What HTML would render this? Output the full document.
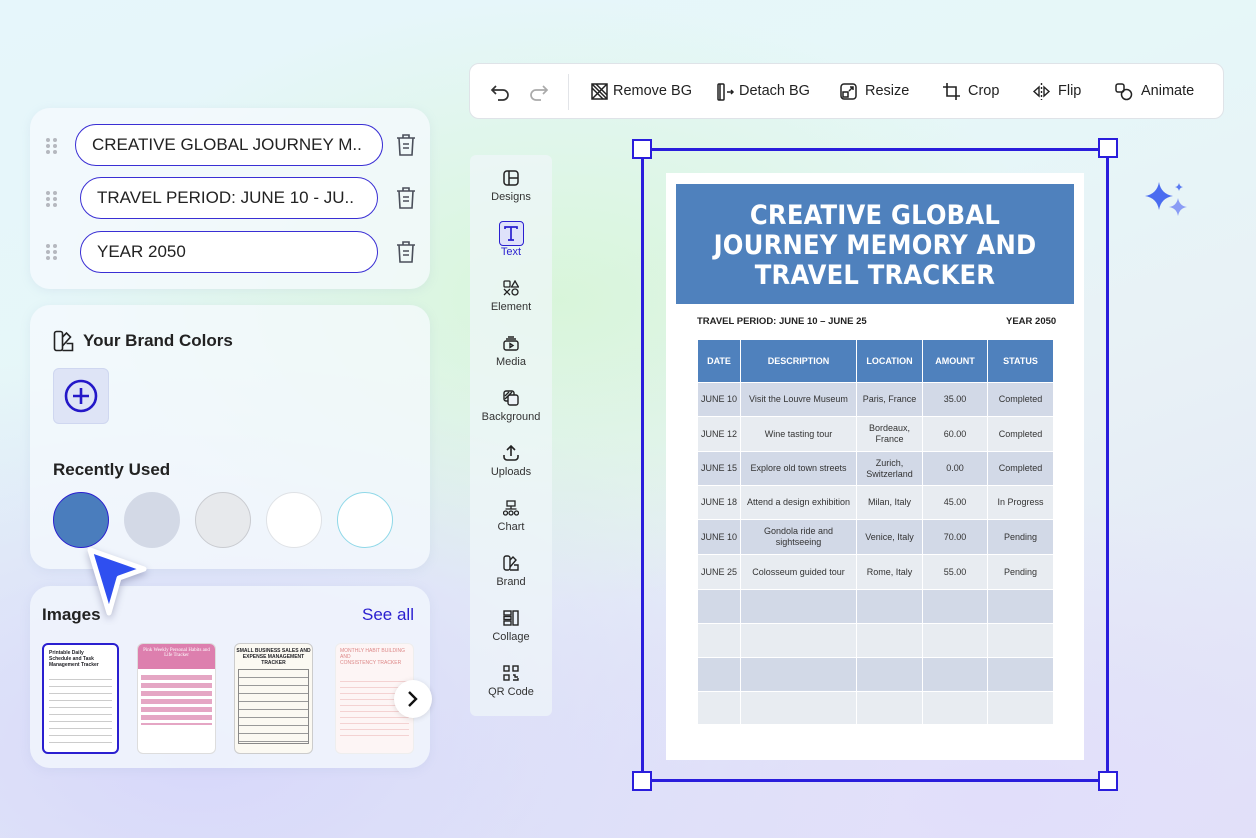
<!DOCTYPE html>
<html><head><meta charset="utf-8"><style>
*{margin:0;padding:0;box-sizing:border-box}
body{width:1256px;height:838px;overflow:hidden;position:relative;font-family:"Liberation Sans",sans-serif;color:#1f1f24;
background:radial-gradient(ellipse 500px 300px at 560px 300px,rgba(215,245,215,.9),transparent),radial-gradient(ellipse 700px 400px at 200px 750px,rgba(215,215,250,1),transparent),radial-gradient(ellipse 600px 300px at 1000px 800px,rgba(225,222,250,1),transparent),linear-gradient(160deg,#e6f6fb 0%,#e6f7f8 35%,#e8f1f6 60%,#e2e3f8 100%)}
.abs{position:absolute}
.panel{position:absolute;background:rgba(245,250,253,.75);border-radius:20px;box-shadow:0 2px 10px rgba(150,170,200,.15)}
.pill{position:absolute;height:42px;border:1.6px solid #3a2fd4;border-radius:22px;background:#fff;font-size:17px;line-height:39px;padding-left:16px;color:#222;white-space:nowrap;overflow:hidden}
.dots{position:absolute;width:12px;height:16px}
.dots i{position:absolute;width:4px;height:4px;border-radius:50%;background:#b5b8bf}
.sw{position:absolute;top:492px;width:56px;height:56px;border-radius:50%}
.tb{position:absolute;top:63px;left:469px;width:755px;height:56px;background:#fff;border:1px solid #dfe3e8;border-radius:10px}
.ti{position:absolute;top:0;height:56px;line-height:55px;font-size:14.5px;color:#222;white-space:nowrap}
.ti svg{position:absolute;top:19px;left:0}
.side{position:absolute;left:470px;top:155px;width:82px;height:561px;background:rgba(240,246,250,.7);border-radius:6px}
.si{position:absolute;left:0;width:82px;text-align:center;font-size:11px;color:#333}
.si svg{display:block;margin:0 auto 5px}
.h{position:absolute;width:20px;height:20px;background:#fff;border:2.5px solid #2a1ddc}
table{position:absolute;left:697px;top:339px;width:357px;border-collapse:collapse;font-family:"Liberation Sans",sans-serif;font-size:9px;color:#333;text-align:center}
td,th{border:1.5px solid #fff;padding:0 2px;line-height:11px}
th{background:#4f81bd;color:#fff;font-size:9px;height:43px}
tr.a td{background:#d2d9e7}
tr.b td{background:#e8ecf1}
</style></head><body>

<div class="panel" style="left:30px;top:108px;width:400px;height:181px"></div>
<div class="dots" style="left:46px;top:138px"><i style="left:0;top:0"></i><i style="left:7px;top:0"></i><i style="left:0;top:6px"></i><i style="left:7px;top:6px"></i><i style="left:0;top:12px"></i><i style="left:7px;top:12px"></i></div>
<div class="dots" style="left:46px;top:191px"><i style="left:0;top:0"></i><i style="left:7px;top:0"></i><i style="left:0;top:6px"></i><i style="left:7px;top:6px"></i><i style="left:0;top:12px"></i><i style="left:7px;top:12px"></i></div>
<div class="dots" style="left:46px;top:244px"><i style="left:0;top:0"></i><i style="left:7px;top:0"></i><i style="left:0;top:6px"></i><i style="left:7px;top:6px"></i><i style="left:0;top:12px"></i><i style="left:7px;top:12px"></i></div>
<div class="pill" style="left:75px;top:124px;width:308px">CREATIVE GLOBAL JOURNEY M..</div>
<div class="pill" style="left:80px;top:177px;width:298px">TRAVEL PERIOD: JUNE 10 - JU..</div>
<div class="pill" style="left:80px;top:231px;width:298px">YEAR 2050</div>
<svg class="abs" style="left:395px;top:133px" width="22" height="24" viewBox="0 0 22 24" fill="none" stroke="#4a4f5a" stroke-width="1.6"><path d="M2 5h18M8 5V2h6v3M4 5l1 17h12l1-17M8 11h6M8 15h6"/></svg>
<svg class="abs" style="left:395px;top:186px" width="22" height="24" viewBox="0 0 22 24" fill="none" stroke="#4a4f5a" stroke-width="1.6"><path d="M2 5h18M8 5V2h6v3M4 5l1 17h12l1-17M8 11h6M8 15h6"/></svg>
<svg class="abs" style="left:395px;top:240px" width="22" height="24" viewBox="0 0 22 24" fill="none" stroke="#4a4f5a" stroke-width="1.6"><path d="M2 5h18M8 5V2h6v3M4 5l1 17h12l1-17M8 11h6M8 15h6"/></svg>

<div class="panel" style="left:30px;top:305px;width:400px;height:264px"></div>
<svg class="abs" style="left:53px;top:330px" width="22" height="22" viewBox="0 0 22 22" fill="none" stroke="#222" stroke-width="1.6"><rect x="1.5" y="1.5" width="8" height="19" rx="2"/><path d="M9.5 7l4-4 4 4-8 9M9.5 20.5h10v-7h-6"/></svg>
<div class="abs" style="left:83px;top:331px;font-size:17px;font-weight:bold;color:#222">Your Brand Colors</div>
<div class="abs" style="left:53px;top:368px;width:56px;height:56px;background:#dee4f6;border-radius:6px;border:1px solid #cfd7f0"></div>
<svg class="abs" style="left:64px;top:379px" width="34" height="34" viewBox="0 0 34 34" fill="none" stroke="#2418c8" stroke-width="2.6"><circle cx="17" cy="17" r="15"/><path d="M17 9v16M9 17h16"/></svg>
<div class="abs" style="left:53px;top:460px;font-size:17px;font-weight:bold;color:#222">Recently Used</div>
<div class="sw" style="left:53px;background:#4a7dbd;border:1.5px solid #2a1fd0"></div>
<div class="sw" style="left:124px;background:#d3d9e6"></div>
<div class="sw" style="left:195px;background:#e7e9ec;border:1px solid #c9cbd0"></div>
<div class="sw" style="left:266px;background:#fff;border:1px solid #dfe2e6"></div>
<div class="sw" style="left:337px;background:#fff;border:1px solid #8fd8e8"></div>

<div class="panel" style="left:30px;top:586px;width:400px;height:182px;background:rgba(240,244,252,.9)"></div>
<div class="abs" style="left:42px;top:605px;font-size:17px;font-weight:bold;color:#222">Images</div>
<div class="abs" style="left:362px;top:605px;font-size:17px;color:#2a1fd0">See all</div>
<div class="abs" style="left:42px;top:643px;width:77px;height:111px;background:#fff;border:2px solid #2a1fd0;border-radius:6px;padding:5px;font-size:5px;font-weight:bold;line-height:6px">Printable Daily<br>Schedule and Task<br>Management Tracker
<div style="margin-top:5px;height:72px;background:repeating-linear-gradient(#fff 0 6px,#ccc 6px 7px)"></div></div>
<div class="abs" style="left:137px;top:643px;width:79px;height:111px;background:#fff;border-radius:6px;border:1px solid #ddd;overflow:hidden">
<div style="height:25px;background:#dd7fae;color:#fff;font-size:5px;text-align:center;padding-top:4px;font-family:'Liberation Serif',serif">Pink Weekly Personal Habits and<br>Life Tracker</div>
<div style="margin:4px 3px;height:52px;background:repeating-linear-gradient(#fff 0 2px,#e5a6c4 2px 7px,#fff 7px 8px)"></div></div>
<div class="abs" style="left:234px;top:643px;width:79px;height:111px;background:#fbf9f2;border-radius:6px;border:1px solid #ccc;overflow:hidden">
<div style="font-size:5px;font-weight:bold;text-align:center;padding-top:4px;line-height:6px">SMALL BUSINESS SALES AND<br>EXPENSE MANAGEMENT<br>TRACKER</div>
<div style="margin:3px 3px;height:75px;border:1px solid #888;background:repeating-linear-gradient(#fbf9f2 0 7px,#999 7px 8px)"></div></div>
<div class="abs" style="left:335px;top:643px;width:79px;height:111px;background:#fdf5f5;border-radius:6px;border:1px solid #eee;overflow:hidden">
<div style="font-size:5px;color:#d88;padding:4px 4px;line-height:6px">MONTHLY HABIT BUILDING AND<br>CONSISTENCY TRACKER</div>
<div style="margin:6px 4px;height:60px;background:repeating-linear-gradient(#fdf5f5 0 5px,#f4d2d2 5px 6px)"></div></div>
<div class="abs" style="left:394px;top:680px;width:38px;height:38px;border-radius:50%;background:#fff;box-shadow:0 1px 6px rgba(0,0,0,.12)"></div>
<svg class="abs" style="left:405px;top:689px" width="14" height="20" viewBox="0 0 14 20" fill="none" stroke="#111" stroke-width="2.4"><path d="M4 3l7 7-7 7"/></svg>

<svg class="abs" style="left:78px;top:530px" width="80" height="95" viewBox="0 0 80 95"><path d="M12 20l54 19-25 9-10 35z" fill="#2f4ff0" stroke="#fff" stroke-width="5" stroke-linejoin="round" style="filter:drop-shadow(0 3px 4px rgba(0,0,60,.25))"/></svg>

<div class="tb">
<svg class="abs" style="left:20px;top:19px" width="20" height="18" viewBox="0 0 20 18" fill="none" stroke="#333" stroke-width="1.7"><path d="M6 3L2 7l4 4M2 7h11a5 5 0 010 10H8"/></svg>
<svg class="abs" style="left:59px;top:19px" width="20" height="18" viewBox="0 0 20 18" fill="none" stroke="#aaa" stroke-width="1.7"><path d="M14 3l4 4-4 4M18 7H7a5 5 0 000 10h5"/></svg>
<div class="abs" style="left:98px;top:10px;width:1px;height:36px;background:#e2e4e8"></div>
<div class="ti" style="left:121px;padding-left:22px"><svg width="17" height="17" viewBox="0 0 17 17" fill="none" stroke="#222" stroke-width="1.5"><rect x="1" y="1" width="15" height="15"/><path d="M1 1l15 15M16 1L1 16M5 1l11 11M1 5l11 11"/></svg>Remove BG</div>
<div class="ti" style="left:247px;padding-left:22px"><svg width="18" height="18" viewBox="0 0 18 18" fill="none" stroke="#222" stroke-width="1.5"><rect x="1" y="1" width="6" height="16" rx="1"/><path d="M3 1v16M10 9h6M14 7l2 2-2 2"/></svg>Detach BG</div>
<div class="ti" style="left:370px;padding-left:25px"><svg width="17" height="17" viewBox="0 0 17 17" fill="none" stroke="#222" stroke-width="1.5"><rect x="1" y="1" width="15" height="15" rx="3"/><rect x="3" y="9" width="5" height="5"/><path d="M9 8l4-4M10 4h3v3"/></svg>Resize</div>
<div class="ti" style="left:473px;padding-left:25px"><svg width="17" height="17" viewBox="0 0 17 17" fill="none" stroke="#222" stroke-width="1.6"><path d="M4 0v13h13M0 4h13v13"/></svg>Crop</div>
<div class="ti" style="left:562px;padding-left:26px"><svg width="19" height="17" viewBox="0 0 19 17" fill="none" stroke="#222" stroke-width="1.4"><path d="M9.5 0v17" stroke-dasharray="2 2"/><path d="M7 4L2 8.5 7 13zM12 4l5 4.5-5 4.5z"/></svg>Flip</div>
<div class="ti" style="left:645px;padding-left:26px"><svg width="18" height="18" viewBox="0 0 18 18" fill="none" stroke="#222" stroke-width="1.5"><rect x="1" y="1" width="8" height="8" rx="2"/><circle cx="11.5" cy="11.5" r="5"/></svg>Animate</div>
</div>

<div class="side">
<div class="si" style="top:15px"><svg width="16" height="16" viewBox="0 0 16 16" fill="none" stroke="#222" stroke-width="1.5"><rect x="1" y="1" width="14" height="14" rx="3"/><path d="M6 1v14M6 8h9"/></svg>Designs</div>
<div class="abs" style="left:29px;top:66px;width:25px;height:25px;border:1.5px solid #2a1fd0;border-radius:4px;background:#dfe2fa"></div>
<div class="si" style="top:70px;color:#2a1fd0"><svg width="16" height="16" viewBox="0 0 16 16" fill="none" stroke="#2a1fd0" stroke-width="1.7"><path d="M2 4V2h12v2M8 2v13M5 15h6"/></svg>Text</div>
<div class="si" style="top:125px"><svg width="16" height="16" viewBox="0 0 16 16" fill="none" stroke="#222" stroke-width="1.3"><rect x="1" y="1" width="6" height="6" rx="1"/><path d="M12 1l3.5 6h-7z"/><path d="M1 9l6 6M7 9l-6 6"/><circle cx="12" cy="12" r="3"/></svg>Element</div>
<div class="si" style="top:180px"><svg width="16" height="16" viewBox="0 0 16 16" fill="none" stroke="#222" stroke-width="1.4"><rect x="1" y="6" width="14" height="9" rx="2"/><path d="M3 4h10M5 2h6M7 8.5v4l3-2z"/></svg>Media</div>
<div class="si" style="top:235px"><svg width="16" height="16" viewBox="0 0 16 16" fill="none" stroke="#222" stroke-width="1.4"><rect x="1" y="1" width="10" height="10" rx="2"/><rect x="5" y="5" width="10" height="10" rx="2" fill="#eef3f7"/><path d="M2 6l4-4M2 9l7-7"/></svg>Background</div>
<div class="si" style="top:290px"><svg width="16" height="16" viewBox="0 0 16 16" fill="none" stroke="#222" stroke-width="1.6"><path d="M8 11V1M4 5l4-4 4 4M1 10v2a3 3 0 003 3h8a3 3 0 003-3v-2"/></svg>Uploads</div>
<div class="si" style="top:345px"><svg width="16" height="16" viewBox="0 0 16 16" fill="none" stroke="#222" stroke-width="1.3"><rect x="4" y="1" width="8" height="5"/><path d="M8 6v3M2.5 9h11"/><circle cx="2.5" cy="13" r="2"/><circle cx="8" cy="13" r="2"/><circle cx="13.5" cy="13" r="2"/></svg>Chart</div>
<div class="si" style="top:400px"><svg width="16" height="16" viewBox="0 0 16 16" fill="none" stroke="#222" stroke-width="1.4"><rect x="1" y="1" width="6" height="14" rx="2"/><path d="M7 5l3-3 3 3-6 7M7 15h8v-5h-4"/></svg>Brand</div>
<div class="si" style="top:455px"><svg width="16" height="16" viewBox="0 0 16 16" fill="none" stroke="#222" stroke-width="1.4"><rect x="1" y="1" width="7" height="4"/><rect x="1" y="6.5" width="7" height="3"/><rect x="1" y="11" width="7" height="4"/><rect x="10" y="1" width="5" height="14"/></svg>Collage</div>
<div class="si" style="top:510px"><svg width="16" height="16" viewBox="0 0 16 16" fill="none" stroke="#222" stroke-width="1.4"><rect x="1" y="1" width="5" height="5"/><rect x="10" y="1" width="5" height="5"/><rect x="1" y="10" width="5" height="5"/><path d="M10 10h2v2h3M10 15h5v-2"/></svg>QR Code</div>
</div>

<div class="abs" style="left:641px;top:148px;width:468px;height:634px;border:3px solid #2a1ddc"></div>
<div class="h" style="left:632px;top:139px"></div>
<div class="h" style="left:1098px;top:138px"></div>
<div class="h" style="left:632px;top:771px"></div>
<div class="h" style="left:1098px;top:771px"></div>

<div class="abs" style="left:666px;top:173px;width:418px;height:587px;background:#fff"></div>
<div class="abs" style="left:676px;top:184px;width:398px;height:120px;background:#4f81bd;color:#fff;font-weight:bold;font-size:27px;line-height:30px;text-align:center;padding-top:17px;font-family:'DejaVu Sans Condensed','Liberation Sans',sans-serif;letter-spacing:.2px">CREATIVE GLOBAL<br>JOURNEY MEMORY AND<br>TRAVEL TRACKER</div>
<div class="abs" style="left:697px;top:316px;font-size:9.5px;font-weight:bold;color:#222">TRAVEL PERIOD: JUNE 10 – JUNE 25</div>
<div class="abs" style="left:1006px;top:316px;font-size:9.5px;font-weight:bold;color:#222">YEAR 2050</div>
<table>
<tr><th style="width:43px">DATE</th><th style="width:116px">DESCRIPTION</th><th style="width:66px">LOCATION</th><th style="width:65px">AMOUNT</th><th>STATUS</th></tr>
<tr class="a" style="height:34px"><td>JUNE 10</td><td>Visit the Louvre Museum</td><td>Paris, France</td><td>35.00</td><td>Completed</td></tr>
<tr class="b" style="height:35px"><td>JUNE 12</td><td>Wine tasting tour</td><td>Bordeaux,<br>France</td><td>60.00</td><td>Completed</td></tr>
<tr class="a" style="height:34px"><td>JUNE 15</td><td>Explore old town streets</td><td>Zurich,<br>Switzerland</td><td>0.00</td><td>Completed</td></tr>
<tr class="b" style="height:34px"><td>JUNE 18</td><td>Attend a design exhibition</td><td>Milan, Italy</td><td>45.00</td><td>In Progress</td></tr>
<tr class="a" style="height:35px"><td>JUNE 10</td><td>Gondola ride and<br>sightseeing</td><td>Venice, Italy</td><td>70.00</td><td>Pending</td></tr>
<tr class="b" style="height:35px"><td>JUNE 25</td><td>Colosseum guided tour</td><td>Rome, Italy</td><td>55.00</td><td>Pending</td></tr>
<tr class="a" style="height:34px"><td></td><td></td><td></td><td></td><td></td></tr>
<tr class="b" style="height:34px"><td></td><td></td><td></td><td></td><td></td></tr>
<tr class="a" style="height:34px"><td></td><td></td><td></td><td></td><td></td></tr>
<tr class="b" style="height:33px"><td></td><td></td><td></td><td></td><td></td></tr>
</table>

<svg class="abs" style="left:1143px;top:180px" width="50" height="40" viewBox="0 0 50 40"><path d="M16 2q2 12 14 14-12 2-14 14-2-12-14-14 12-2 14-14z" fill="#4a6cf0"/><path d="M35 18q1.5 8 9 9-7.5 1-9 9-1.5-8-9-9 7.5-1 9-9z" fill="#8a9cf5"/><path d="M36 3q.8 3.5 4 4-3.2.5-4 4-.8-3.5-4-4 3.2-.5 4-4z" fill="#5b7bf2"/></svg>
</body></html>
